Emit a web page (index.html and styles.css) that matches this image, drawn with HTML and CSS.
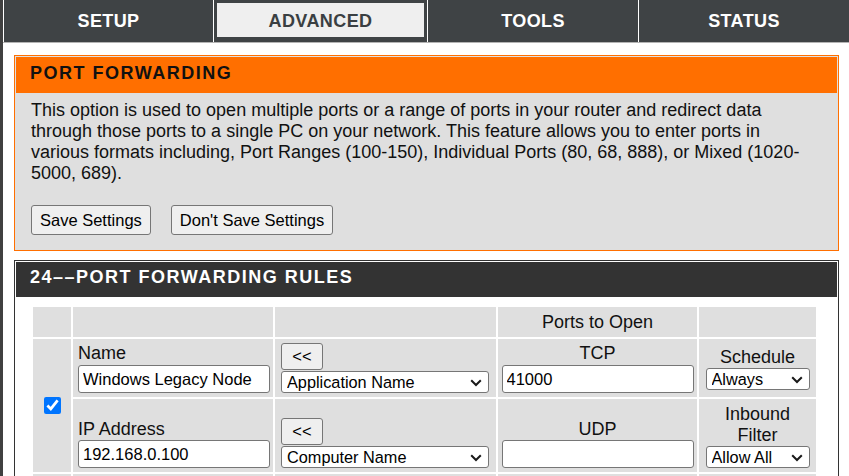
FILE: index.html
```html
<!DOCTYPE html>
<html lang="en">
<head>
<meta charset="utf-8">
<title>Port Forwarding</title>
<link rel="stylesheet" href="styles.css">
</head>
<body>
<div class="page">
  <nav class="tabs">
    <div class="tab">SETUP</div>
    <div class="tab active"><span>ADVANCED</span></div>
    <div class="tab">TOOLS</div>
    <div class="tab">STATUS</div>
  </nav>
  <main class="content">
    <section class="box intro-box">
      <h2 class="box-title">PORT FORWARDING</h2>
      <p class="intro">This option is used to open multiple ports or a range of ports in your router and redirect data through those ports to a single PC on your network. This feature allows you to enter ports in various formats including, Port Ranges (100-150), Individual Ports (80, 68, 888), or Mixed (1020-5000, 689).</p>
      <div class="actions">
        <button class="btn">Save Settings</button>
        <button class="btn">Don't Save Settings</button>
      </div>
    </section>
    <section class="box rules-box">
      <h2 class="box-title">24––PORT FORWARDING RULES</h2>
      <table class="rules">
        <colgroup>
          <col class="w1"><col class="w2"><col class="w3"><col class="w4"><col class="w5">
        </colgroup>
        <tr class="r-head">
          <td></td><td></td><td></td><td class="c">Ports to Open</td><td></td>
        </tr>
        <tr class="r-top">
          <td rowspan="2" class="chk"><input type="checkbox" checked></td>
          <td class="l"><div class="lbl">Name</div><input class="txt" type="text" value="Windows Legacy Node"></td>
          <td class="l3"><button class="btn btn-small">&lt;&lt;</button><span class="sel-wrap sel-wide"><select class="sel"><option>Application Name</option></select><svg class="chev" viewBox="0 0 12 8" aria-hidden="true"><path d="M1.2 1.2 L6 6 L10.8 1.2" fill="none" stroke="#1a1a1a" stroke-width="2"/></svg></span></td>
          <td class="c"><div class="lbl">TCP</div><input class="txt" type="text" value="41000"></td>
          <td class="c"><div class="lbl">Schedule</div><span class="sel-wrap sel-narrow"><select class="sel"><option>Always</option></select><svg class="chev" viewBox="0 0 12 8" aria-hidden="true"><path d="M1.2 1.2 L6 6 L10.8 1.2" fill="none" stroke="#1a1a1a" stroke-width="2"/></svg></span></td>
        </tr>
        <tr class="r-bot">
          <td class="l b"><div class="lbl">IP Address</div><input class="txt" type="text" value="192.168.0.100"></td>
          <td class="l3 b"><button class="btn btn-small">&lt;&lt;</button><span class="sel-wrap sel-wide"><select class="sel"><option>Computer Name</option></select><svg class="chev" viewBox="0 0 12 8" aria-hidden="true"><path d="M1.2 1.2 L6 6 L10.8 1.2" fill="none" stroke="#1a1a1a" stroke-width="2"/></svg></span></td>
          <td class="c b"><div class="lbl">UDP</div><input class="txt" type="text" value=""></td>
          <td class="c"><div class="lbl">Inbound<br>Filter</div><span class="sel-wrap sel-narrow"><select class="sel"><option>Allow All</option></select><svg class="chev" viewBox="0 0 12 8" aria-hidden="true"><path d="M1.2 1.2 L6 6 L10.8 1.2" fill="none" stroke="#1a1a1a" stroke-width="2"/></svg></span></td>
        </tr>
        <tr class="r-top">
          <td rowspan="2" class="chk"><input type="checkbox"></td>
          <td class="l"><div class="lbl">Name</div><input class="txt" type="text" value=""></td>
          <td class="l3"><button class="btn btn-small">&lt;&lt;</button><span class="sel-wrap sel-wide"><select class="sel"><option>Application Name</option></select><svg class="chev" viewBox="0 0 12 8" aria-hidden="true"><path d="M1.2 1.2 L6 6 L10.8 1.2" fill="none" stroke="#1a1a1a" stroke-width="2"/></svg></span></td>
          <td class="c"><div class="lbl">TCP</div><input class="txt" type="text" value=""></td>
          <td class="c"><div class="lbl">Schedule</div><span class="sel-wrap sel-narrow"><select class="sel"><option>Always</option></select><svg class="chev" viewBox="0 0 12 8" aria-hidden="true"><path d="M1.2 1.2 L6 6 L10.8 1.2" fill="none" stroke="#1a1a1a" stroke-width="2"/></svg></span></td>
        </tr>
        <tr class="r-bot">
          <td class="l b"><div class="lbl">IP Address</div><input class="txt" type="text" value=""></td>
          <td class="l3 b"><button class="btn btn-small">&lt;&lt;</button><span class="sel-wrap sel-wide"><select class="sel"><option>Computer Name</option></select><svg class="chev" viewBox="0 0 12 8" aria-hidden="true"><path d="M1.2 1.2 L6 6 L10.8 1.2" fill="none" stroke="#1a1a1a" stroke-width="2"/></svg></span></td>
          <td class="c b"><div class="lbl">UDP</div><input class="txt" type="text" value=""></td>
          <td class="c"><div class="lbl">Inbound<br>Filter</div><span class="sel-wrap sel-narrow"><select class="sel"><option>Allow All</option></select><svg class="chev" viewBox="0 0 12 8" aria-hidden="true"><path d="M1.2 1.2 L6 6 L10.8 1.2" fill="none" stroke="#1a1a1a" stroke-width="2"/></svg></span></td>
        </tr>
      </table>
    </section>
  </main>
</div>
</body>
</html>
```

FILE: styles.css
```css
* { box-sizing: border-box; }

html, body {
  margin: 0;
  height: 100%;
  overflow: hidden;
}

body {
  background: #404040;
  font-family: "Liberation Sans", Arial, sans-serif;
  font-size: 18px;
  color: #111;
}

.page {
  margin-left: 3px;
  min-height: 100%;
  background: #fff;
}

/* top navigation */
.tabs {
  display: grid;
  grid-template-columns: 210px 214px 211px 211px;
  height: 43px;
  background: #3f4345;
  border-bottom: 1px solid #b4b4b4;
}

.tab {
  border-left: 1px solid #fff;
  color: #fff;
  font-weight: bold;
  font-size: 18px;
  letter-spacing: 0.4px;
  line-height: 42px;
  text-align: center;
}

.tab.active span {
  display: block;
  margin: 3px 3px 0;
  height: 34px;
  line-height: 36px;
  background: #efefef;
  color: #3a3f42;
}

/* content */
.content {
  padding: 12px 10px 0 11px;
}

.box {
  border: 1px solid;
  padding: 1px;
}

.box-title {
  margin: 0;
  font-size: 18px;
  font-weight: bold;
  letter-spacing: 1.5px;
  line-height: 21px;
}

.intro-box {
  border-color: #ff6f00;
  background: #dfdfdf;
}

.intro-box .box-title {
  padding: 6px 14px 9px;
  background: #ff6f00;
  color: #111;
}

.intro {
  margin: 7px 0 0;
  padding: 0 25px 0 15px;
  line-height: 21px;
}

.actions {
  display: flex;
  gap: 20px;
  padding: 21px 15px 14px;
}

.btn {
  height: 30px;
  padding: 0 8px;
  font-family: "Liberation Sans", Arial, sans-serif;
  font-size: 16.5px;
  color: #000;
  background: #efefef;
  border: 1px solid #767676;
  border-radius: 3px;
}

.rules-box {
  margin-top: 9px;
  border-color: #333;
  background: #fff;
}

.rules-box .box-title {
  padding: 5px 14px 9px;
  background: #333;
  color: #fff;
}

/* rules table */
.rules {
  margin: 8px 0 0 15px;
  width: 787px;
  table-layout: fixed;
  border-collapse: separate;
  border-spacing: 2px;
}

.w1 { width: 38px; }
.w2 { width: 200px; }
.w3 { width: 221px; }
.w4 { width: 199px; }
.w5 { width: 117px; }

.rules td {
  background: #dfdfdf;
  padding: 0;
  vertical-align: middle;
  color: #111;
}

.r-head td { height: 30px; }
.r-top td { height: 58px; }
.r-bot td { height: 73px; }

.rules td.b { vertical-align: bottom; }
.rules td.b > :last-child { margin-bottom: 4px; }
.rules td.b .txt { margin-top: 0; }

.c { text-align: center; }

.lbl { line-height: 21px; }

.l .lbl, .l .txt { margin-left: 5px; }
.l3 .btn, .l3 .sel-wrap { margin-left: 6px; }
.l3 .sel-wrap { margin-top: 1px; }

.chk input {
  display: block;
  width: 17px;
  height: 17px;
  margin: 0 auto;
}

.txt {
  display: block;
  width: 192px;
  height: 28px;
  margin-top: 1px;
  padding: 0 4px;
  font-family: "Liberation Sans", Arial, sans-serif;
  font-size: 16.5px;
  color: #000;
  background: #fff;
  border: 1px solid #767676;
  border-radius: 3px;
}

.c .txt { margin-left: auto; margin-right: auto; }

.btn-small {
  display: block;
  width: 42px;
  height: 27px;
  padding: 0;
}

/* select with drawn chevron */
.sel-wrap {
  position: relative;
  display: block;
  height: 22px;
}

.sel {
  display: block;
  width: 100%;
  height: 22px;
  margin: 0;
  padding: 0 22px 0 5px;
  appearance: none;
  -webkit-appearance: none;
  font-family: "Liberation Sans", Arial, sans-serif;
  font-size: 16.3px;
  line-height: 20px;
  text-align: left;
  color: #000;
  background: #fff;
  border: 1px solid #767676;
  border-radius: 3px;
}

.chev {
  position: absolute;
  right: 7px;
  top: 50%;
  width: 12px;
  height: 8px;
  margin-top: -3px;
  pointer-events: none;
}

.sel-wide { width: 208px; }
.sel-narrow { width: 104px; margin-left: auto; margin-right: auto; }
```
